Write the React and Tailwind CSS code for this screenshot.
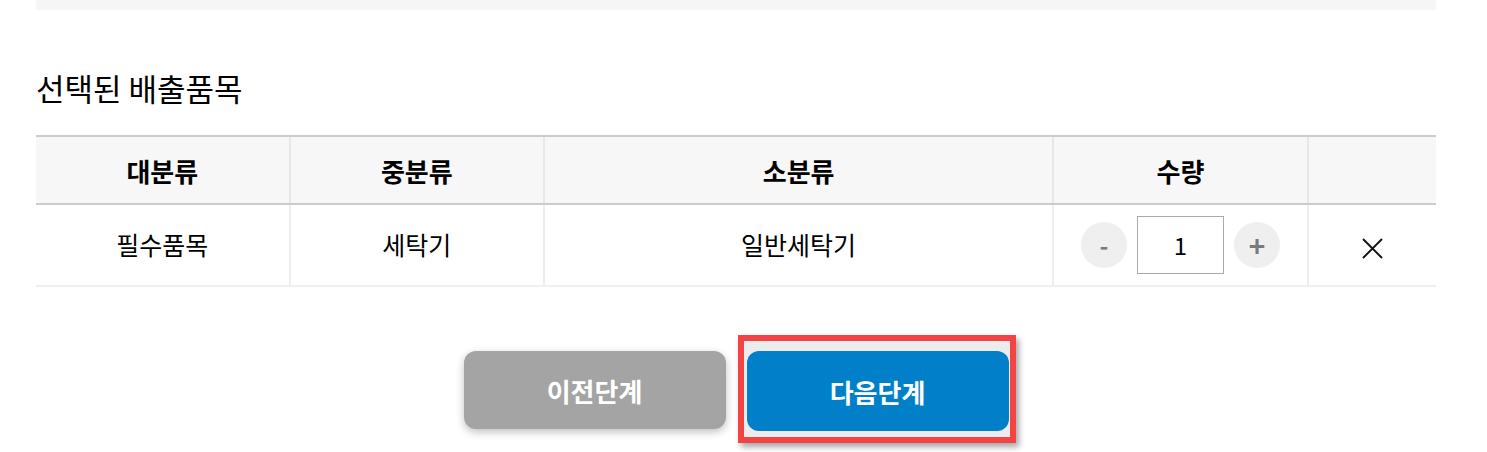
import React, { useState } from "react";

const font = { fontFamily: '"Noto Sans CJK KR", "Noto Sans", sans-serif' };

function App() {
  const [qty, setQty] = useState(1);

  return (
    <div className="w-[1487px] h-[452px] bg-white overflow-hidden" style={font}>
      <div className="ml-[36px] w-[1400px]">
        <div className="h-[10px] bg-[#f6f6f6]" />

        <h2 className="mt-[58px] text-[31px] leading-[40px] text-black font-normal">
          선택된 배출품목
        </h2>

        {/* 선택 품목 테이블 */}
        <div className="mt-[27px]">
          <div className="grid grid-cols-[2fr_2fr_4fr_2fr_1fr] h-[70px] bg-[#f7f7f7] border-t-2 border-b-2 border-[#cccccc] text-[26px] font-bold text-black">
            <div className="flex items-center justify-center border-r-2 border-[#e8e8e8]">대분류</div>
            <div className="flex items-center justify-center border-r-2 border-[#e8e8e8]">중분류</div>
            <div className="flex items-center justify-center border-r-2 border-[#e8e8e8]">소분류</div>
            <div className="flex items-center justify-center border-r-2 border-[#e8e8e8]">수량</div>
            <div />
          </div>
          <div className="grid grid-cols-[2fr_2fr_4fr_2fr_1fr] h-[82px] border-b-2 border-[#efefef] text-[25px] text-black">
            <div className="flex items-center justify-center border-r-2 border-[#ededed]">필수품목</div>
            <div className="flex items-center justify-center border-r-2 border-[#ededed]">세탁기</div>
            <div className="flex items-center justify-center border-r-2 border-[#ededed]">일반세탁기</div>
            <div className="flex items-center justify-center gap-[10px] border-r-2 border-[#ededed]">
              <button
                onClick={() => setQty(Math.max(1, qty - 1))}
                className="w-[46px] h-[46px] rounded-full bg-[#efefef] text-[#7a7a7a] text-[24px] font-bold flex items-center justify-center"
              >
                -
              </button>
              <div className="w-[87px] h-[58px] border border-[#aaaaaa] bg-white flex items-center justify-center text-[24px]">
                {qty}
              </div>
              <button
                onClick={() => setQty(qty + 1)}
                className="w-[46px] h-[46px] rounded-full bg-[#efefef] text-[#7a7a7a] text-[28px] font-bold flex items-center justify-center"
              >
                +
              </button>
            </div>
            <div className="flex items-center justify-center pt-[6px]">
              <svg width="21" height="21" viewBox="0 0 21 21" fill="none" stroke="#111" strokeWidth="1.9">
                <path d="M1 1L20 20M20 1L1 20" />
              </svg>
            </div>
          </div>
        </div>

        <div className="mt-[64px] flex justify-center gap-[21px]">
          <button className="w-[262px] h-[78px] rounded-[12px] bg-[#a4a4a4] text-white text-[26px] font-bold shadow-[0_3px_8px_rgba(0,0,0,0.25)]">
            이전단계
          </button>
          <div className="relative">
            <div className="absolute -left-[9px] -top-[16px] -right-[7px] -bottom-[12px] border-[6px] border-[#f24444] bg-[#ececec] shadow-[3px_4px_6px_rgba(0,0,0,0.35)]" />
            <button className="relative w-[262px] h-[80px] rounded-[12px] bg-[#0180c9] text-white text-[26px] font-bold">
              다음단계
            </button>
          </div>
        </div>
      </div>
    </div>
  );
}

export default App;
